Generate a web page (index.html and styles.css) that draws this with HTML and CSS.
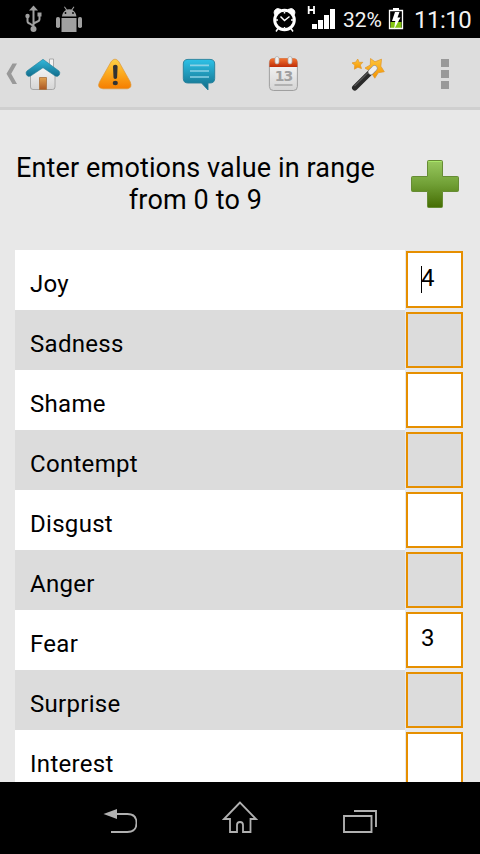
FILE: index.html
```html
<!DOCTYPE html>
<html lang="en">
<head>
<meta charset="utf-8">
<title>Emotions</title>
<link rel="stylesheet" href="styles.css">
</head>
<body>
<div class="screen">
  <header class="status">
    <svg class="notices" width="60" height="38" viewBox="24 0 60 38" fill="#a0a0a0">
      <path d="M33.500 5.500l4.500 5h-9z"/><circle cx="33.500" cy="29" r="3"/>
      <path d="M33.500 9v20M27.500 16v5q0 2 2 2.500l4 2.500M39.500 14v5q0 2-2 2.500l-4 2" fill="none" stroke="#a0a0a0" stroke-width="2"/>
      <circle cx="27.500" cy="16" r="2.200"/><path d="M37.500 12.500h4v4h-4z"/>
      <path d="M62 16.500q.3-4.500 4-6.500l-2-3 .8-.5 2.200 3q2.200-.7 4.400 0l2.200-3 .8.500-2 3q3.700 2 4 6.500zM61.500 18h15v14h-15z"/>
      <rect x="56" y="17" width="4" height="11" rx="1.800"/><rect x="78" y="17" width="4" height="11" rx="1.800"/>
      <circle cx="65.500" cy="13" r=".9" fill="#000"/><circle cx="73" cy="13" r=".9" fill="#000"/>
    </svg>
    <svg class="signals" width="64" height="38" viewBox="272 0 64 38">
      <circle cx="284.500" cy="20" r="9.800" fill="none" stroke="#fff" stroke-width="3"/>
      <path d="M274.500 14.500q-1.500-4.500 3-6l3.500 1zM294.500 14.500q1.500-4.500-3-6l-3.500 1z" fill="#fff" stroke="#fff"/>
      <path d="M280.500 16.500l4 4 5-4M278 28.500l-2 3M291 28.500l2 3M284.500 12v1.500M284.500 27v1.500M276 20h2M291 20h2" fill="none" stroke="#fff" stroke-width="1.500"/>
      <path d="M308.700 6v8M314 6v8M308.700 10h5.300" stroke="#fff" stroke-width="1.800" fill="none"/>
      <path d="M312 24h5v5h-5zM318 20h5v9h-5zM324 15h5v14h-5zM330 9h5v20h-5z" fill="#fff"/>
    </svg>
    <span class="percent">32%</span>
    <svg class="battery" width="16" height="38" viewBox="388 0 16 38">
      <path d="M390.500 22h11v6h-11z" fill="#83c510"/>
      <path d="M389.500 10.500h13v18h-13z" fill="none" stroke="#fff" stroke-width="1.300"/><path d="M393 8h6v2h-6z" fill="#fff"/>
      <path d="M395 12h4.500l-2 5.500h3l-6.500 12 1.300-8.500H392z" fill="#fff"/>
    </svg>
    <span class="clock">11:10</span>
  </header>

  <nav class="toolbar">
    <svg width="73" height="40" viewBox="0 0 73 40">
      <defs>
        <linearGradient id="roof" x2="0" y2="1"><stop stop-color="#32b9dc"/><stop offset="1" stop-color="#126d8c"/></linearGradient>
        <linearGradient id="wall" x2="0" y2="1"><stop stop-color="#fafafa"/><stop offset="1" stop-color="#d5d5d5"/></linearGradient>
        <linearGradient id="door" x2="0" y2="1"><stop stop-color="#e0a250"/><stop offset="1" stop-color="#ab5722"/></linearGradient>
      </defs>
      <path d="M12.500 9.500H17L11.200 19.800 17 30h-4.500L6.500 19.800z" fill="#999"/>
      <path d="M49.500 5h4v9h-4z" fill="#f2f2f2" stroke="#999" stroke-width=".8"/>
      <path d="M30.500 20L43 9.500 55 20v13q0 2.500-2.500 2.500H33q-2.500 0-2.500-2.500z" fill="url(#wall)" stroke="#999" stroke-width=".8"/>
      <path d="M39.500 23.500h7v12h-7z" fill="url(#door)" stroke="#a9713d" stroke-width=".8"/>
      <path d="M43 5.300L59 17q1.500 1.500.3 4-1.500 2.200-4 1.100L43 13.700 30.500 22.100q-2.500 1.100-4-1.100-1.100-2.500.4-4z" fill="url(#roof)" stroke="#247d97" stroke-width=".6"/>
    </svg>
    <svg width="40" height="40" viewBox="0 0 40 40">
      <defs><linearGradient id="warn" x2="0" y2="1"><stop stop-color="#fdd247"/><stop offset=".5" stop-color="#fca81d"/><stop offset="1" stop-color="#f57d00"/></linearGradient></defs>
      <path d="M16.200 7.600q3.800-4.900 7.600 0L35.300 28q2.300 6-3 6.800H8q-6.500-.8-3.500-6.800z" fill="url(#warn)" stroke="#dd983c" stroke-width=".7"/>
      <path d="M18 12.500q0-1.800 2.300-1.800t2.300 1.800l-.5 11q0 1.400-1.800 1.400t-1.800-1.400z" fill="#333"/><ellipse cx="20.300" cy="29" rx="2.600" ry="2.200" fill="#333"/>
    </svg>
    <svg width="40" height="40" viewBox="0 0 40 40">
      <defs><linearGradient id="chat" x2="0" y2="1"><stop stop-color="#2dc1e7"/><stop offset="1" stop-color="#126b86"/></linearGradient></defs>
      <path d="M9 5.400h22q4.700 0 4.700 4.600v14.500q0 4.500-4.700 4.500h-2v7l-6.500-7H9q-4.700 0-4.700-4.500V10q0-4.600 4.700-4.600z" fill="url(#chat)" stroke="#267f9a" stroke-width=".9"/>
      <path d="M11 11.300h19M11 17h19M11 23h19" stroke="#8bd1e5" stroke-width="1.700"/>
    </svg>
    <svg width="40" height="40" viewBox="0 0 40 40">
      <defs><linearGradient id="calTop" x2="0" y2="1"><stop stop-color="#f47531"/><stop offset="1" stop-color="#bf2d08"/></linearGradient></defs>
      <rect x="6.400" y="4.500" width="28" height="32" rx="4" fill="url(#wall)" stroke="#999" stroke-width=".9"/>
      <path d="M6.400 13V8q0-3.800 4-3.800h20q4 0 4 3.800v5z" fill="url(#calTop)"/>
      <rect x="12" y="2.500" width="4" height="7.500" rx="2" fill="#eee" stroke="#aaa" stroke-width=".7"/><rect x="25" y="2.500" width="4" height="7.500" rx="2" fill="#eee" stroke="#aaa" stroke-width=".7"/>
      <text class="day" x="20.500" y="27" text-anchor="middle">13</text>
      <path d="M11.500 31h18" stroke="#a5a5a5" stroke-width="1.500"/>
    </svg>
    <svg width="40" height="40" viewBox="0 0 40 40">
      <defs><linearGradient id="star" x2="0" y2="1"><stop stop-color="#fdc63b"/><stop offset="1" stop-color="#f59300"/></linearGradient></defs>
      <g fill="url(#star)" stroke="#e29a30" stroke-width=".8" stroke-linejoin="round">
        <path d="M22.500 4.500l4.500 3.300 6.500-2.600-.7 7 3.500 5.500-6 1-3.500 5.500-4-6.500L17 14l5.300-3z"/>
        <path d="M9.700 5l1.500 3.400 3.600-.1-2.500 2.700 1.200 3.600-3.600-1.400-3.500 2 .4-4-2.800-2.300 3.900-.8z"/>
      </g>
      <path d="M6.800 33.700L25 15.800" stroke="#292929" stroke-width="5.600" stroke-linecap="round"/>
      <path d="M6.500 32L20 18.700" stroke="#555" stroke-width="1.200"/>
      <path d="M23 17.800l3.500-3.500" stroke="#999" stroke-width="6" stroke-linecap="round"/><path d="M23 17.800l3.500-3.500" stroke="#eee" stroke-width="4.800" stroke-linecap="round"/>
    </svg>
    <svg width="40" height="40" viewBox="0 0 40 40"><path d="M16 5h8v8h-8zM16 16h8v8h-8zM16 27h8v8h-8z" fill="#999"/></svg>
  </nav>

  <section class="intro">
    <h1>Enter emotions value in range<br>from 0 to 9</h1>
    <svg width="50" height="50" viewBox="0 0 50 50">
      <defs><linearGradient id="plus" x2="0" y2="1"><stop stop-color="#99c95f"/><stop offset=".5" stop-color="#71a036"/><stop offset="1" stop-color="#456d03"/></linearGradient></defs>
      <path d="M18.500 1.500h13q1 0 1 1v15h15q1 0 1 1v13q0 1-1 1h-15v15q0 1-1 1h-13q-1 0-1-1v-15h-15q-1 0-1-1v-13q0-1 1-1h15v-15q0-1 1-1z" fill="url(#plus)" stroke="#668c34" stroke-width="1"/>
      <path d="M18.500 2.500h13" stroke="#a9e768"/>
    </svg>
  </section>

  <main class="list">
    <div class="row first"><span class="name">Joy</span><span class="value"><i class="caret"></i>4</span></div>
    <div class="row"><span class="name">Sadness</span><span class="value"></span></div>
    <div class="row"><span class="name">Shame</span><span class="value"></span></div>
    <div class="row"><span class="name">Contempt</span><span class="value"></span></div>
    <div class="row"><span class="name">Disgust</span><span class="value"></span></div>
    <div class="row"><span class="name">Anger</span><span class="value"></span></div>
    <div class="row"><span class="name">Fear</span><span class="value">3</span></div>
    <div class="row"><span class="name">Surprise</span><span class="value"></span></div>
    <div class="row"><span class="name">Interest</span><span class="value"></span></div>
  </main>

  <footer class="system">
    <svg width="34" height="72" viewBox="103 782 34 72"><path d="M103.500 814l13.500-5v10z" fill="#b0b0b0"/><path d="M116 814h11.500q9 0 9 9t-9 9H111" fill="none" stroke="#b0b0b0" stroke-width="1.800"/></svg>
    <svg width="36" height="72" viewBox="222 782 36 72"><path d="M240 802.500l-16 16.500h6v13h7v-7q0-3 3-3t3 3v7h7.500v-13h5.500z" fill="none" stroke="#b0b0b0" stroke-width="1.800"/></svg>
    <svg width="35" height="72" viewBox="342 782 35 72"><path d="M344 816h27.500v16H344zM354 811h22v16" fill="none" stroke="#b0b0b0" stroke-width="1.900"/></svg>
  </footer>
</div>
</body>
</html>
```
FILE: styles.css
```css
* { box-sizing: border-box; }
body { margin: 0; font-family: Roboto, sans-serif; color: #000; }
svg { display: block; flex: none; }
.screen { display: flex; flex-direction: column; width: 480px; height: 854px; overflow: hidden; background: #e8e8e8; }

.status { display: flex; flex: none; height: 38px; padding-left: 24px; background: #000; color: #f2f2f2; line-height: 40px; white-space: nowrap; }
.signals { flex: none; margin-left: 188px; }
.percent { flex: none; width: 45px; margin-left: 7px; font-size: 21px; }
.clock { margin-left: 10px; font-size: 24px; letter-spacing: -.5px; }

.toolbar { display: grid; flex: none; grid-template-columns: 73px 84px 84px 84px 86px 68px; justify-items: center; height: 72px; padding-top: 16px; background: #ddd; border-bottom: 3px solid #cfcfcf; }
.day { font: bold 14px "DejaVu Sans", sans-serif; fill: #a0a0a0; letter-spacing: -1px; }

.intro { display: flex; flex: none; height: 140px; padding: 42px 20px 0 15px; justify-content: space-between; }
.intro h1 { width: 361px; margin: 0; font-size: 27px; font-weight: 400; line-height: 32px; letter-spacing: .14px; text-align: center; white-space: nowrap; }
.intro svg { margin-top: 7px; }

.list { flex: none; height: 532px; padding-left: 15px; overflow: hidden; }
.row { display: flex; height: 60px; font-size: 24px; --fill: #fff; }
.row:nth-child(even) { --fill: #dcdcdc; }
.name { width: 390px; height: 60px; padding-left: 15px; overflow: hidden; background: var(--fill); line-height: 69px; letter-spacing: .3px; }
.value { position: relative; width: 57px; height: 56px; margin: 2px 0 0 1px; padding-left: 13px; border: 2px solid #e68f00; background: var(--fill); line-height: 48px; }
.first .value { height: 57px; margin-top: 1px; line-height: 50px; }
.caret { position: absolute; left: 13px; top: 13px; width: 1px; height: 27px; background: #000; }

.system { display: flex; flex: none; height: 72px; padding: 0 103px; justify-content: space-between; background: #000; }
```
